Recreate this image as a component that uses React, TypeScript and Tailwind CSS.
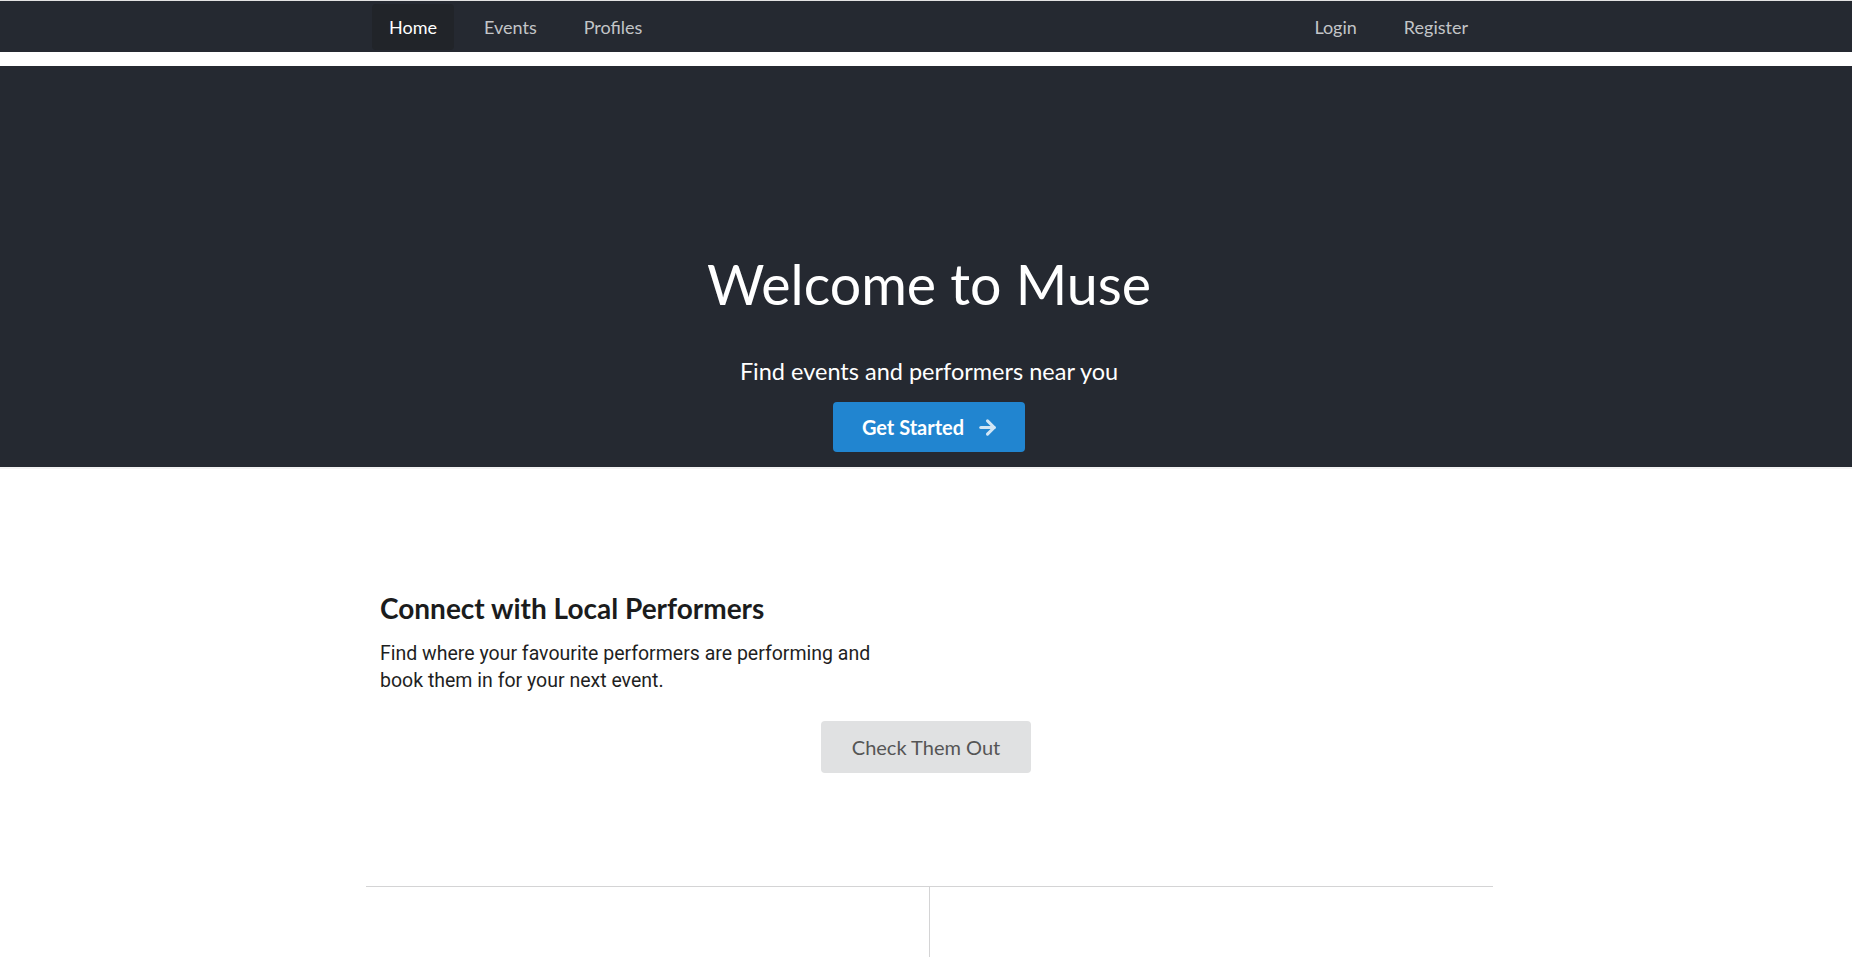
import React from 'react';
import { ArrowRight } from 'lucide-react';

function NavItem({ label, active }: { label: string; active?: boolean }) {
  return (
    <a
      href="#"
      className={`flex h-[46px] items-center rounded-[4px] px-[17px] pt-[2px] text-[18px] ${
        active ? 'bg-[#212429] text-white' : 'text-[#c3c5c8]'
      }`}
    >
      {label}
    </a>
  );
}

export default function App() {
  return (
    <div className="min-h-screen bg-white font-['Lato',sans-serif]">
      <nav className="h-[52px] border-t border-[#e3e3e3] bg-[#252931]">
        <div className="ml-[366px] flex h-full w-[1127px] items-center justify-between pr-[8px] pl-[6px]">
          <div className="flex items-center gap-[13px]">
            <NavItem label="Home" active />
            <NavItem label="Events" />
            <NavItem label="Profiles" />
          </div>
          <div className="flex items-center gap-[13px]">
            <NavItem label="Login" />
            <NavItem label="Register" />
          </div>
        </div>
      </nav>

      <div className="h-[14px]" />

      <section className="flex flex-col items-center border-b-2 border-[#f3f3f3] bg-[#252931] pt-[190px] pb-[15px] pl-[6px] text-white">
        <h1 className="text-[55.5px] leading-[56px] font-normal">Welcome to Muse</h1>
        <p className="mt-[47px] text-[23.5px] leading-[24px]">Find events and performers near you</p>
        <button className="mt-[19px] flex h-[50px] items-center gap-[12px] rounded-[4px] bg-[#2185d0] pr-[26px] pl-[29px] text-[20px] font-bold text-white">
          Get Started
          <ArrowRight className="h-[23px] w-[23px] opacity-80" strokeWidth={3.2} />
        </button>
      </section>

      <main className="ml-[366px] w-[1127px]">
        <div className="px-[14px] pt-[125px]">
          <h2 className="text-[28px] leading-[28px] font-bold text-[#1b1c1d]">
            Connect with Local Performers
          </h2>
          <p className="mt-[18px] w-[510px] font-['Roboto',sans-serif] text-[19.5px] leading-[27px] text-[#1f1f1f]">
            Find where your favourite performers are performing and book them in for your next event.
          </p>
        </div>
        <div className="mt-[27px] flex justify-center pr-[7px]">
          <button className="h-[52px] rounded-[4px] bg-[#e0e1e2] px-[31px] text-[20px] text-[#555555]">
            Check Them Out
          </button>
        </div>
        <div className="mt-[113px] grid h-[80px] grid-cols-2 border-t border-[#d4d4d5]">
          <div className="border-r border-[#d4d4d5]" />
          <div />
        </div>
      </main>
    </div>
  );
}
